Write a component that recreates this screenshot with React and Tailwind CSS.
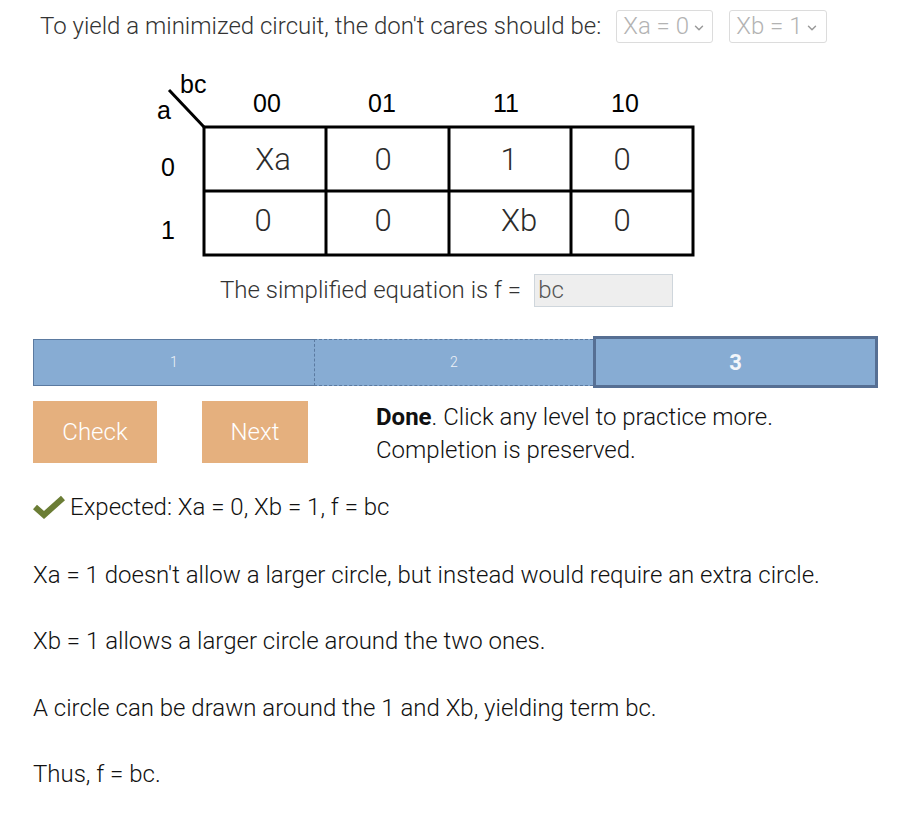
import { ChevronDown } from "lucide-react";

const Select = ({ label, width }) => (
  <div className={`flex h-[33px] ${width} items-center rounded-[3px] border border-[#dcdcdc] bg-white pl-[6px] text-[24px] text-[#b3b3b3]`}>
    <span>{label}</span>
    <ChevronDown size={14} strokeWidth={2.5} className="ml-[3px] mt-[2px] text-[#9a9a9a]" />
  </div>
);

const KMap = () => (
  <svg width="550" height="195" className="ml-[150px] mt-[22px] block">
    {/* corner */}
    <line x1="19" y1="25" x2="54" y2="62" stroke="#000" strokeWidth="3" />
    <g fontFamily="'Liberation Sans', Arial, sans-serif" fontSize="25" fill="#000">
      <text x="30" y="28">bc</text>
      <text x="7" y="54">a</text>
      <text x="117" y="47" textAnchor="middle">00</text>
      <text x="232" y="47" textAnchor="middle">01</text>
      <text x="356" y="47" textAnchor="middle">11</text>
      <text x="475" y="47" textAnchor="middle">10</text>
      <text x="18" y="111" textAnchor="middle">0</text>
      <text x="18" y="174" textAnchor="middle">1</text>
    </g>
    {/* grid */}
    <rect x="54" y="62" width="489" height="128" fill="none" stroke="#000" strokeWidth="3" />
    <line x1="176" y1="62" x2="176" y2="190" stroke="#000" strokeWidth="3" />
    <line x1="299" y1="62" x2="299" y2="190" stroke="#000" strokeWidth="3" />
    <line x1="421" y1="62" x2="421" y2="190" stroke="#000" strokeWidth="3" />
    <line x1="54" y1="126" x2="543" y2="126" stroke="#000" strokeWidth="3" />
    <g fontFamily="Roboto, sans-serif" fontWeight="300" fontSize="31" fill="#2b2b2b" textAnchor="middle">
      <text x="123" y="105">Xa</text>
      <text x="233" y="105">0</text>
      <text x="359" y="105">1</text>
      <text x="472" y="105">0</text>
      <text x="113" y="166">0</text>
      <text x="233" y="166">0</text>
      <text x="369" y="166">Xb</text>
      <text x="472" y="166">0</text>
    </g>
  </svg>
);

const Check = () => (
  <svg width="32" height="24" viewBox="0 0 32 24" className="shrink-0">
    <path d="M2 12 L11 20 L30 3" fill="none" stroke="#6b7d35" strokeWidth="6" strokeLinejoin="miter" />
  </svg>
);

export default function App() {
  return (
    <div className="min-h-screen bg-white pb-10 font-['Roboto',sans-serif] text-[24px] font-light text-[#111]">
      {/* prompt */}
      <div className="flex h-[43px] items-center pl-[40px] pt-[10px] leading-[33px]">
        <span className="text-[#333]">To yield a minimized circuit, the don't cares should be:</span>
        <div className="ml-[15px]">
          <Select label="Xa = 0" width="w-[97px]" />
        </div>
        <div className="ml-[16px]">
          <Select label="Xb = 1" width="w-[98px]" />
        </div>
      </div>

      <KMap />

      {/* equation */}
      <div className="mt-[14px] flex items-center pl-[220px] leading-[33px]">
        <span className="text-[#333]">The simplified equation is f =</span>
        <div className="ml-[13px] flex h-[33px] w-[139px] items-center border border-[#cfd6dc] bg-[#eeeeee] px-[3px] text-[#555]">
          bc
        </div>
      </div>

      {/* levels */}
      <div className="ml-[33px] mt-[32px] flex h-[47px] w-[845px]">
        <div className="flex w-[281px] items-center justify-center border-y border-l border-[#5b7aa0] bg-[#87acd3] text-[14px] text-[#eef2f8]">
          1
        </div>
        <div className="flex w-[279px] items-center justify-center border-y border-l border-dashed border-[#5b7aa0] bg-[#87acd3] text-[14px] text-[#eef2f8]">
          2
        </div>
        <div className="-mb-[2px] -mt-[3px] flex flex-1 items-center justify-center border-[3px] border-[#566f93] bg-[#87acd3] text-[22px] font-bold text-[#f3f6fa]">
          3
        </div>
      </div>

      {/* actions */}
      <div className="ml-[33px] mt-[15px] flex items-start">
        <button className="flex h-[62px] w-[124px] items-center justify-center bg-[#e5b07e] text-white">Check</button>
        <button className="ml-[45px] flex h-[62px] w-[106px] items-center justify-center bg-[#e5b07e] text-white">Next</button>
        <div className="ml-[68px] leading-[33px]">
          <span className="font-bold">Done</span>. Click any level to practice more.
          <br />
          Completion is preserved.
        </div>
      </div>

      <div className="ml-[33px] mt-[25px] flex items-center leading-[30px]">
        <Check />
        <span className="ml-[5px]">Expected: Xa = 0, Xb = 1, f = bc</span>
      </div>

      <div className="ml-[33px] leading-[30px]">
        <p className="mt-[38px]">Xa = 1 doesn't allow a larger circle, but instead would require an extra circle.</p>
        <p className="mt-[36px]">Xb = 1 allows a larger circle around the two ones.</p>
        <p className="mt-[37px]">A circle can be drawn around the 1 and Xb, yielding term bc.</p>
        <p className="mt-[36px]">Thus, f = bc.</p>
      </div>
    </div>
  );
}
